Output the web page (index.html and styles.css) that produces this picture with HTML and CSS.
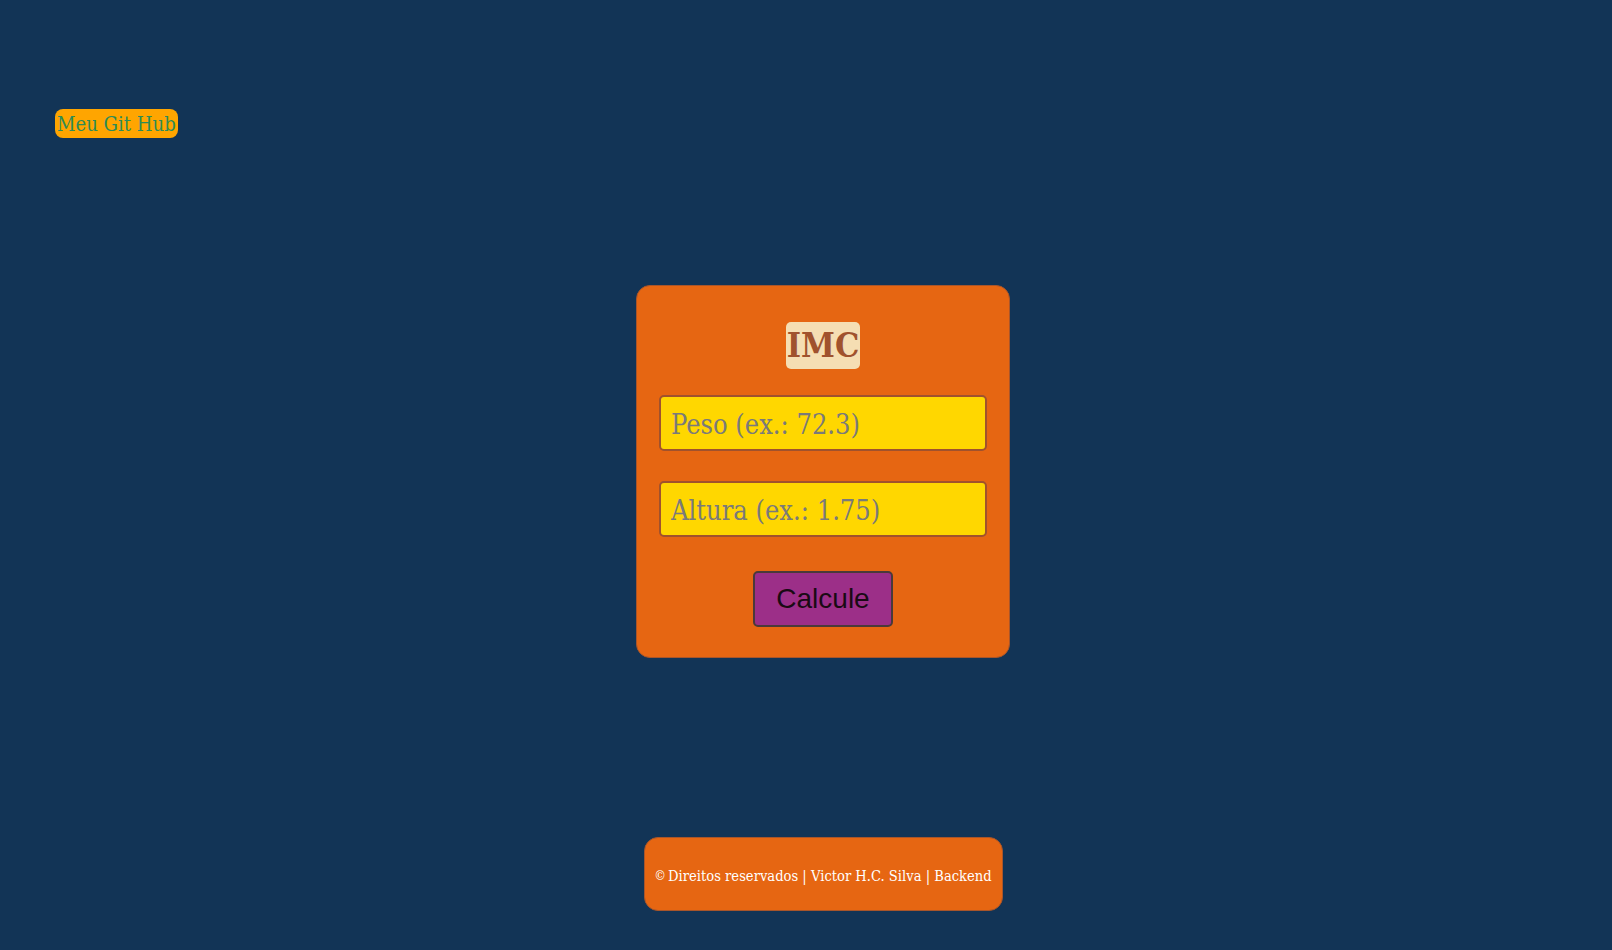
FILE: index.html
```html
<!DOCTYPE html>
<html lang="pt-BR">
<head>
<meta charset="utf-8">
<title>IMC</title>
<link rel="stylesheet" href="styles.css">
</head>
<body>
<header class="top">
  <a class="git" href="#">Meu Git Hub</a>
</header>
<main class="main">
  <form class="card">
    <h1 class="title">IMC</h1>
    <input class="field" type="text" placeholder="Peso (ex.: 72.3)">
    <input class="field" type="text" placeholder="Altura (ex.: 1.75)">
    <button class="btn" type="button">Calcule</button>
  </form>
</main>
<footer class="foot">
  <p class="foot-text"><span class="copy">©</span>Direitos reservados | Victor H.C. Silva | Backend</p>
</footer>
</body>
</html>
```
FILE: styles.css
```css
html, body {
  margin: 0;
  padding: 0;
}
body {
  background: #123456;
  font-family: "DejaVu Serif Condensed", "DejaVu Serif", serif;
  width: 1612px;
  height: 950px;
  display: flex;
  flex-direction: column;
  overflow: hidden;
}
.top {
  padding: 109px 0 0 55px;
  height: 176px;
  box-sizing: border-box;
}
.git {
  display: inline-block;
  background: #ffa500;
  color: #2e8b57;
  text-decoration: none;
  font-size: 20.1px;
  line-height: 31px;
  height: 29px;
  padding: 0 2px;
  border-radius: 8px;
  vertical-align: top;
}
.main {
  display: flex;
  justify-content: center;
  align-items: flex-start;
  height: 661px;
  box-sizing: border-box;
  padding-top: 109px;
}
.card {
  width: 374px;
  height: 373px;
  box-sizing: border-box;
  margin: 0 0 0 34px;
  background: #e66612;
  border: 1px solid #a8552a;
  border-radius: 14px;
  display: flex;
  flex-direction: column;
  align-items: center;
  padding-top: 36px;
}
.title {
  margin: 0;
  background: #f5deb3;
  color: #a0522d;
  font-size: 34px;
  line-height: 47px;
  height: 47px;
  padding: 0 1px;
  border-radius: 5px;
  font-weight: bold;
}
.field {
  width: 328px;
  height: 56px;
  box-sizing: border-box;
  margin-top: 26px;
  background: #ffd700;
  border: 2px solid #a0522d;
  border-radius: 5px;
  font-family: "DejaVu Serif Condensed", "DejaVu Serif", serif;
  font-size: 27px;
  padding: 2px 10px 0;
  color: #333;
}
.field + .field {
  margin-top: 30px;
}
.field::placeholder {
  color: #7a7a7a;
}
.btn {
  margin-top: 34px;
  width: 140px;
  height: 56px;
  box-sizing: border-box;
  background: #9c2f88;
  border: 2px solid #4a3a3a;
  border-radius: 5px;
  font-family: "Liberation Sans", Arial, sans-serif;
  font-size: 28px;
  color: #1a0a14;
  padding: 0;
}
.foot {
  display: flex;
  justify-content: center;
}
.foot-text {
  margin: 0 0 0 34px;
  width: 359px;
  height: 74px;
  box-sizing: border-box;
  background: #e66612;
  border: 1px solid #a8552a;
  border-radius: 14px;
  color: #fff;
  font-size: 14.6px;
  display: flex;
  align-items: center;
  justify-content: center;
  white-space: nowrap;
  padding-top: 2px;
}
.copy {
  font-size: 13px;
  margin-right: 2px;
}
```
